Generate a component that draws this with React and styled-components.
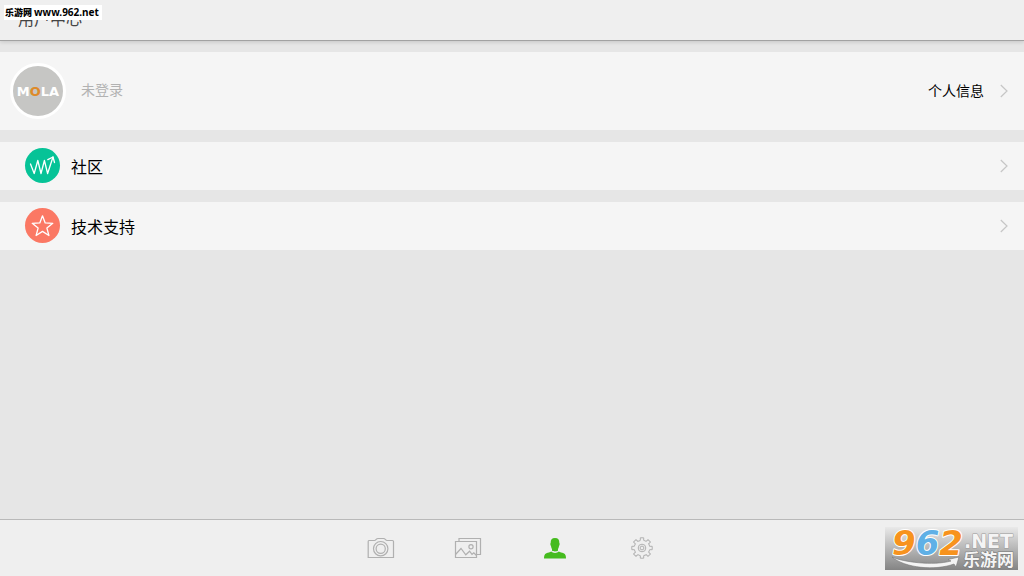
import React, { useState } from 'react';
import styled, { createGlobalStyle } from 'styled-components';

const colors = {
    page: '#e6e6e6',
    panel: '#f5f5f5',
    bar: '#efefef',
    line: '#b9b9b9',
    icon: '#b0b0b0',
    active: '#45bb1e',
    community: '#06c397',
    support: '#fb7864',
};

const CommunityIcon = () => (
    <svg width="35" height="35" viewBox="0 0 35 35" fill="none" stroke="#fff" strokeWidth="1.3" strokeLinejoin="round" strokeLinecap="round" aria-hidden="true">
        <path d="M5.5 16 L9.2 25.5 L12.8 12.5 L16 25.5 L19.4 12.5 L22.6 25.5 L28 9" />
        <path d="M22.8 11.6 L28 9 L29.5 14.5" />
    </svg>
);

const SupportIcon = () => (
    <svg width="35" height="35" viewBox="0 0 35 35" fill="none" stroke="#fff" strokeWidth="1.3" strokeLinejoin="round" aria-hidden="true">
        <path d="M17.5 7.8 L20.2 14.9 L27.8 15.3 L21.9 20.1 L23.9 27.5 L17.5 23.4 L11.1 27.5 L13.1 20.1 L7.2 15.3 L14.8 14.9 Z" />
    </svg>
);

const ChevronIcon = () => (
    <svg width="8" height="14" viewBox="0 0 8 14" fill="none" stroke="#c6c6c6" strokeWidth="1.2" aria-hidden="true">
        <path d="M0.8 1 L7 7 L0.8 13" />
    </svg>
);

const CameraIcon = () => (
    <svg width="28" height="22" viewBox="0 0 28 22" fill="none" stroke="currentColor" strokeWidth="1.2" aria-hidden="true">
        <path d="M1.9 3.5 H7.5 C9 3.5 9 1.5 11 1.5 H16.5 C18.5 1.5 18.5 3.5 20 3.5 H25.5 Q26.5 3.5 26.5 4.5 V20.5 H1.2 V4.5 Q1.2 3.5 1.9 3.5 Z" />
        <circle cx="13.7" cy="11.7" r="7.2" />
        <circle cx="13.7" cy="11.7" r="4.6" />
    </svg>
);

const GalleryIcon = () => (
    <svg width="28" height="22" viewBox="0 0 28 22" fill="none" stroke="currentColor" strokeWidth="1.2" aria-hidden="true">
        <path d="M5 4.5 V1.5 H26.5 V17.5 H22.5" />
        <path d="M1.5 4.5 H22.5 V20.5 H1.5 Z" />
        <path d="M1.5 17.5 L7 11.5 L11.8 17.8 L15.6 14.2 L18 17.3 L19.8 15.8 L22.5 18.5" />
        <circle cx="17" cy="9.7" r="2.1" />
    </svg>
);

const UserIcon = () => (
    <svg width="22" height="21" viewBox="0 0 22 21" fill="currentColor" aria-hidden="true">
        <path d="M11 0 C14.2 0 15.4 1.6 15.3 4.8 C15.9 5.4 15.7 7.4 15 8 C14.8 9.6 14.4 10.4 14 11 V12.6 C13.2 13.8 8.8 13.8 8 12.6 V11 C7.6 10.4 7.2 9.6 7 8 C6.3 7.4 6.1 5.4 6.7 4.8 C6.6 1.6 7.8 0 11 0 Z" />
        <path d="M7.2 13.6 C8.8 15.4 13.2 15.4 14.8 13.6 C16 14.6 18 14.6 19.6 15.2 C21.6 16 22 18 22 20.6 H0 C0 18 0.4 16 2.4 15.2 C4 14.6 6 14.6 7.2 13.6 Z" />
    </svg>
);

// One tooth and one valley of the gear, repeated every 45 degrees around the centre
const GearIcon = () => (
    <svg width="22" height="22" viewBox="0 0 22 22" fill="none" stroke="currentColor" strokeWidth="1" aria-hidden="true">
        {[0, 45, 90, 135, 180, 225, 270, 315].map((angle) => (
            <path key={angle} transform={`rotate(${angle} 11 11)`} d="M9.3 3.4 V0.8 H12.7 V3.4 Q14 3.7 15.17 4.43" />
        ))}
        <circle cx="11" cy="11" r="3.8" />
        <circle cx="11" cy="11" r="1.9" />
    </svg>
);

const SiteLogo = () => (
    <svg width="133" height="43" viewBox="0 0 133 43" role="img" aria-label="962.NET 乐游网">
        <defs>
            <linearGradient id="plate" x1="0" y1="0" x2="0" y2="1">
                <stop offset="0" stopColor="#e9e9e9" />
                <stop offset="1" stopColor="#848484" />
            </linearGradient>
        </defs>
        <rect width="133" height="43" fill="url(#plate)" />
        <path d="M7 30 C18 35 48 39 66 34 L63 32.5 L74 30 L71 40 L69 37 C50 44 20 41 7 30 Z" fill="#f4f4f4" stroke="#777" strokeWidth="0.6" />
        <g fontFamily="DejaVu Sans, sans-serif" fontWeight="bold" paintOrder="stroke" strokeLinejoin="round">
            <text x="7" y="28" fontSize="34" fontStyle="italic" fill="#f7931e" stroke="#fff" strokeWidth="2">
                9<tspan fill="#5fb0e6">6</tspan>2
            </text>
            <text x="79" y="21" fontSize="19" fill="#f4f4f4" stroke="#999" strokeWidth="1">.NET</text>
        </g>
        <text x="78" y="39" fontSize="17" fontWeight="bold" fontFamily="Noto Sans CJK SC, sans-serif" fill="#f4f4f4" stroke="#777" strokeWidth="1" paintOrder="stroke">乐游网</text>
    </svg>
);

const rows = [
    { label: '社区', color: colors.community, Icon: CommunityIcon },
    { label: '技术支持', color: colors.support, Icon: SupportIcon },
];

const tabs = [
    { id: 'camera', label: '相机', Icon: CameraIcon },
    { id: 'gallery', label: '相册', Icon: GalleryIcon },
    { id: 'user', label: '用户中心', Icon: UserIcon },
    { id: 'settings', label: '设置', Icon: GearIcon },
];

const App = () => {
    const [active, setActive] = useState('user');

    return (
        <Page>
            <GlobalStyle />
            <Header>
                <Title>用户中心</Title>
                <SiteBadge>乐游网 <span>www.962.net</span></SiteBadge>
            </Header>
            <Content>
                <ProfileRow type="button">
                    <Avatar>M<b>O</b>LA</Avatar>
                    <UserName>未登录</UserName>
                    <InfoLabel>个人信息</InfoLabel>
                    <ChevronIcon />
                </ProfileRow>
                {rows.map(({ label, color, Icon }) => (
                    <MenuRow type="button" key={label}>
                        <RoundIcon $color={color}><Icon /></RoundIcon>
                        <MenuLabel>{label}</MenuLabel>
                        <ChevronIcon />
                    </MenuRow>
                ))}
            </Content>
            <TabBar>
                {tabs.map(({ id, label, Icon }) => (
                    <Tab type="button" key={id} aria-label={label} $active={active === id} onClick={() => setActive(id)}>
                        <Icon />
                    </Tab>
                ))}
            </TabBar>
            <Watermark><SiteLogo /></Watermark>
        </Page>
    );
};

export default App;

// Styling
const GlobalStyle = createGlobalStyle`
    * {
        box-sizing: border-box;
    }

    body {
        margin: 0;
        background: ${colors.page};
        font-family: "Noto Sans CJK SC", sans-serif;
    }

    button {
        border: 0;
        padding: 0;
        font-family: inherit;
        cursor: pointer;
    }

    svg {
        display: block;
        flex-shrink: 0;
    }
`;

const Page = styled.div`
    position: relative;
    display: flex;
    flex-direction: column;
    min-height: 100vh;
`;

const Header = styled.header`
    position: relative;
    height: 41px;
    padding: 0 18px;
    background: ${colors.bar};
    border-bottom: 1px solid #a2a2a2;
    box-shadow: 0 1px 4px rgba(0, 0, 0, 0.15);
`;

const Title = styled.h1`
    margin: 0;
    font-size: 16px;
    font-weight: 400;
    line-height: 36px;
    color: #444;
`;

const SiteBadge = styled.div`
    position: absolute;
    top: 5px;
    left: 4px;
    padding: 0 3px 0 1px;
    background: #fff;
    font-size: 9px;
    font-weight: 900;
    line-height: 14px;
    white-space: nowrap;
    color: #000;

    span {
        font-family: "Noto Sans", sans-serif;
        font-size: 10px;
        font-weight: 700;
    }
`;

const Content = styled.main`
    flex: 1;
    display: flex;
    flex-direction: column;
    gap: 12px;
    padding: 11px 0;
`;

const ProfileRow = styled.button`
    display: flex;
    align-items: center;
    width: 100%;
    height: 78px;
    padding: 0 16px 0 10px;
    background: ${colors.panel};
`;

const Avatar = styled.span`
    display: flex;
    align-items: center;
    justify-content: center;
    width: 56px;
    height: 56px;
    border: 3px solid #fff;
    border-radius: 50%;
    background: #c6c6c4;
    font-family: "DejaVu Sans", sans-serif;
    font-size: 13px;
    font-weight: 700;
    color: #fff;

    b {
        color: #de8a28;
    }
`;

const UserName = styled.span`
    flex: 1;
    margin-left: 15px;
    padding-bottom: 4px;
    text-align: left;
    font-size: 14px;
    color: #b2b2b2;
`;

const InfoLabel = styled.span`
    margin-right: 16px;
    padding-bottom: 2px;
    font-size: 14px;
    color: #000;
`;

const MenuRow = styled.button`
    display: flex;
    align-items: center;
    width: 100%;
    height: 48px;
    padding: 0 16px 1px 25px;
    background: ${colors.panel};
`;

const RoundIcon = styled.span`
    width: 35px;
    height: 35px;
    border-radius: 50%;
    background: ${({ $color }) => $color};
`;

const MenuLabel = styled.span`
    flex: 1;
    margin-left: 11px;
    text-align: left;
    font-size: 16px;
    color: #000;
`;

const TabBar = styled.nav`
    display: flex;
    justify-content: center;
    height: 57px;
    padding-right: 1px;
    background: ${colors.bar};
    border-top: 1px solid ${colors.line};
`;

const Tab = styled.button`
    display: flex;
    align-items: center;
    justify-content: center;
    width: 87px;
    background: none;
    color: ${({ $active }) => ($active ? colors.active : colors.icon)};
`;

const Watermark = styled.div`
    position: absolute;
    right: 6px;
    bottom: 6px;
`;
